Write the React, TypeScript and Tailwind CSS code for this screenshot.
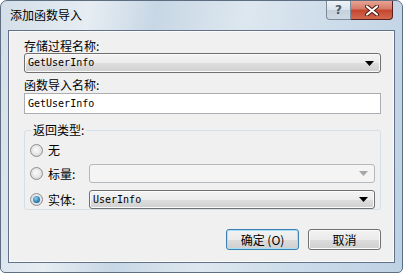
const cjk = "font-['Noto_Sans_CJK_SC','Noto_Sans',sans-serif]";
const mono = "font-['DejaVu_Sans_Mono','Liberation_Mono',monospace]";

function Arrow({ disabled }: { disabled?: boolean }) {
  return (
    <svg width="9" height="5" viewBox="0 0 9 5" className="shrink-0">
      <path d="M0 0h9L4.5 5z" fill={disabled ? '#a7a7a7' : '#000'} />
    </svg>
  );
}

function Combo({ value, disabled, className = '' }: { value?: string; disabled?: boolean; className?: string }) {
  return (
    <div
      className={
        'flex items-center justify-between rounded-[3px] border pl-[3px] pr-[6px] ' +
        (disabled
          ? 'border-[#b3b8bc] bg-[#f4f4f4] '
          : 'border-[#707070] bg-[linear-gradient(#f3f3f3_0%,#ececec_50%,#dedede_50%,#d0d0d0_100%)] shadow-[inset_0_0_0_1px_#fafafa] ') +
        className
      }
    >
      <span className={mono + ' text-[10px] leading-none text-black'}>{value}</span>
      <Arrow disabled={disabled} />
    </div>
  );
}

function Radio({ checked }: { checked?: boolean }) {
  return (
    <div className="flex h-[13px] w-[13px] items-center justify-center rounded-full border border-[#8e8f8f] bg-[radial-gradient(circle_at_50%_40%,#f4f4f4,#d4d4d4)]">
      {checked ? (
        <div className="h-[7px] w-[7px] rounded-full bg-[radial-gradient(circle_at_40%_35%,#8cd3f7,#1d6fa5_70%,#0e4d7a)]" />
      ) : (
        <div className="h-[7px] w-[7px] rounded-full bg-[radial-gradient(circle_at_40%_35%,#fafafa,#e4e4e4)]" />
      )}
    </div>
  );
}

function Button({ children, primary }: { children: React.ReactNode; primary?: boolean }) {
  return (
    <div
      className={
        'flex h-[21px] w-[73px] items-center justify-center rounded-[3px] border text-[12px] text-black ' +
        cjk +
        (primary
          ? ' border-[#3c7fb1] shadow-[inset_0_0_0_1px_#a7e1f8]'
          : ' border-[#707070] shadow-[inset_0_0_0_1px_#fbfbfb]') +
        ' bg-[linear-gradient(#f2f2f2_0%,#ebebeb_50%,#dddddd_50%,#cfcfcf_100%)]'
      }
    >
      {children}
    </div>
  );
}

export default function App() {
  return (
    <div className="h-[274px] w-[403px] bg-white">
      <div className="flex h-[273px] w-[403px] flex-col rounded-t-[7px] rounded-b-[5px] border border-[#5d6e80] bg-[linear-gradient(100deg,#d3dee8_0%,#e6edf3_20%,#c8d7e5_35%,#dde7ef_55%,#cddcea_75%,#bdd1e4_100%)]">
        {/* Title bar */}
        <div className="flex h-[29px] items-start justify-between">
          <span className={cjk + ' mt-[7px] ml-[9px] text-[12px] leading-[14px] text-black'}>添加函数导入</span>
          <div className="mr-[9px] flex h-[19px]">
            <div className="flex w-[25px] items-center justify-center rounded-bl-[4px] border border-t-0 border-[#7b8b9c] bg-[linear-gradient(#eef3f7_0%,#d9e2ea_50%,#c4d0db_50%,#cfdae4_100%)]">
              <span className="font-['DejaVu_Sans',sans-serif] text-[12px] font-bold leading-none text-[#4a5a6b]">?</span>
            </div>
            <div className="flex w-[42px] items-center justify-center rounded-br-[4px] border border-t-0 border-l-0 border-[#5a1f1f] bg-[linear-gradient(#e8a394_0%,#d47a66_45%,#c5452f_50%,#d26a4f_100%)]">
              <svg width="14" height="11" viewBox="0 0 14 11">
                <path d="M2 1.5l10 8M12 1.5l-10 8" stroke="#4b1a12" strokeWidth="4" strokeLinecap="round" />
                <path d="M2 1.5l10 8M12 1.5l-10 8" stroke="#fff" strokeWidth="2.2" strokeLinecap="round" />
              </svg>
            </div>
          </div>
        </div>

        {/* Client area */}
        <div className="mx-[7px] flex h-[233px] flex-col border border-[#61718a] bg-[#f0f0f0] pt-[7px] pr-[13px] pl-[15px] shadow-[inset_0_0_0_1px_#fbfbfb]">
          <div className={cjk + ' h-[15px] text-[12px] leading-[15px] text-black'}>存储过程名称:</div>
          <Combo value="GetUserInfo" className="h-[20px]" />
          <div className={cjk + ' mt-[4px] h-[16px] text-[12px] leading-[16px] text-black'}>函数导入名称:</div>
          <div className="flex h-[21px] items-center border border-[#abadb3] border-t-[#abadb3] bg-white pl-[3px]">
            <span className={mono + ' text-[10px] leading-none text-black'}>GetUserInfo</span>
          </div>

          <div className="relative mt-[16px] flex h-[80px] flex-col rounded-[3px] border border-[#d5dfe5] pt-[9px] pl-[5px] pr-[5px]">
            <span className={cjk + ' absolute -top-[9px] left-[6px] bg-[#f0f0f0] px-[2px] text-[12px] leading-[16px] text-black'}>
              返回类型:
            </span>
            <div className="flex h-[20px] items-center gap-[5px]">
              <Radio />
              <span className={cjk + ' text-[12px] text-black'}>无</span>
            </div>
            <div className="mt-[4px] flex h-[19px] items-center">
              <div className="flex w-[59px] items-center gap-[5px]">
                <Radio />
                <span className={cjk + ' text-[12px] text-black'}>标量:</span>
              </div>
              <Combo disabled className="h-[19px] flex-1" />
            </div>
            <div className="mt-[7px] flex h-[19px] items-center">
              <div className="flex w-[59px] items-center gap-[5px]">
                <Radio checked />
                <span className={cjk + ' text-[12px] text-black'}>实体:</span>
              </div>
              <Combo value="UserInfo" className="h-[19px] flex-1" />
            </div>
          </div>

          <div className="mt-[19px] flex justify-end gap-[9px]">
            <Button primary>确定 (O)</Button>
            <Button>取消</Button>
          </div>
        </div>
      </div>
    </div>
  );
}
